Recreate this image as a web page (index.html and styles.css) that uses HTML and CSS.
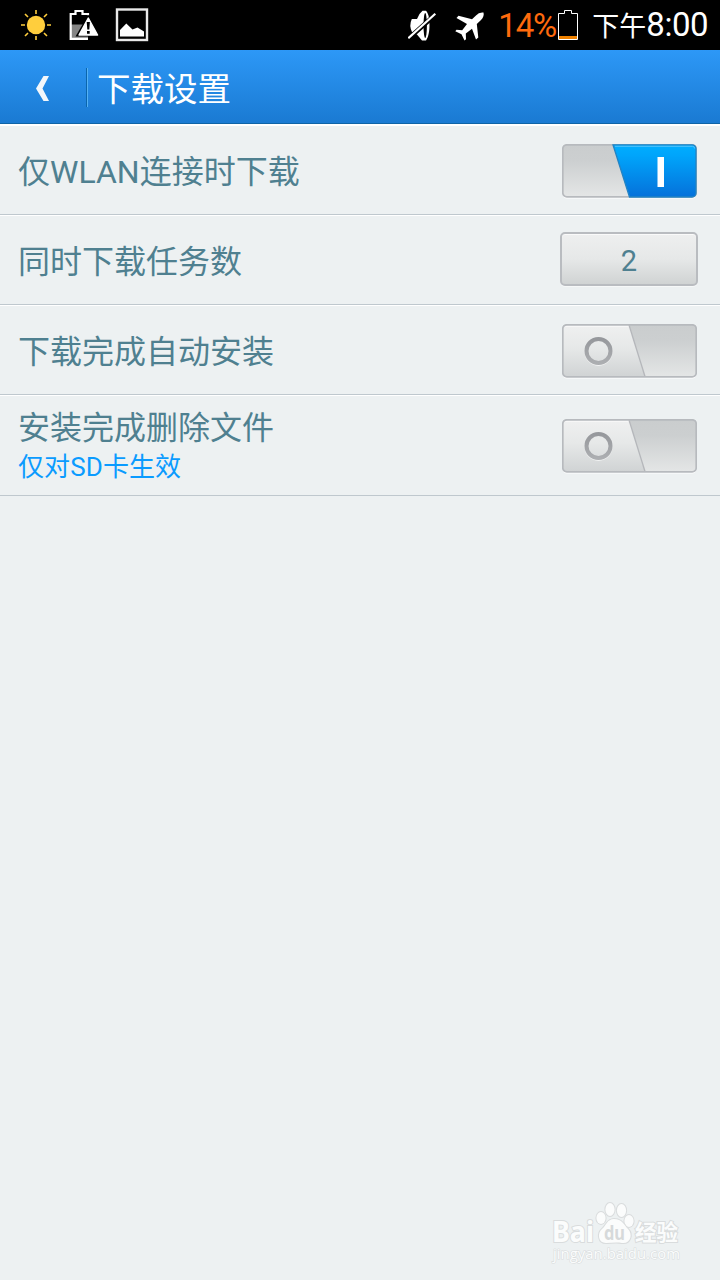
FILE: index.html
```html
<!DOCTYPE html>
<html lang="zh-CN">
<head>
    <meta charset="UTF-8">
    <meta name="viewport" content="width=device-width, initial-scale=1.0">
    <title>下载设置</title>
    <link rel="stylesheet" href="styles.css">
</head>
<body>

    <!-- Shared gradients and switch shapes -->
    <svg class="defs" width="0" height="0" aria-hidden="true">
        <defs>
            <linearGradient id="raised" x1="0" y1="0" x2="0" y2="1">
                <stop offset="0" stop-color="#eff0f0"/>
                <stop offset="0.45" stop-color="#e6e8e8"/>
                <stop offset="1" stop-color="#d0d3d4"/>
            </linearGradient>
            <linearGradient id="track" x1="0" y1="0" x2="0" y2="1">
                <stop offset="0" stop-color="#cacdce"/>
                <stop offset="0.3" stop-color="#cccfd0"/>
                <stop offset="1" stop-color="#e4e6e6"/>
            </linearGradient>
            <linearGradient id="blue" x1="0" y1="0" x2="0" y2="1">
                <stop offset="0" stop-color="#00aeff"/>
                <stop offset="0.2" stop-color="#00a5fb"/>
                <stop offset="1" stop-color="#0571da"/>
            </linearGradient>
            <linearGradient id="ring" x1="0" y1="0" x2="0" y2="1">
                <stop offset="0" stop-color="#96989c"/>
                <stop offset="1" stop-color="#acaeb1"/>
            </linearGradient>
            <symbol id="switchOff" viewBox="0 0 135 55">
                <rect x="1" y="2" width="133" height="52.5" rx="4" fill="#fff"/>
                <rect x="0.5" y="0.5" width="134" height="52.5" rx="4" fill="url(#track)"/>
                <path d="M4.5 1H67L83 52.5H4.5a4 4 0 0 1-4-4V5a4 4 0 0 1 4-4z" fill="url(#raised)"/>
                <path d="M3 2.2H67" stroke="#fafafa" stroke-width="1.2"/>
                <path d="M67 1L83 52.5" stroke="#b5b7bb" stroke-width="1.3"/>
                <rect x="0.8" y="0.8" width="133.4" height="52" rx="4" fill="none" stroke="#b7babe" stroke-width="1.7"/>
                <circle cx="36.5" cy="28" r="12.4" fill="none" stroke="#f2f3f3" stroke-width="3"/>
                <circle cx="36.5" cy="27" r="12" fill="none" stroke="url(#ring)" stroke-width="4"/>
            </symbol>
            <symbol id="switchOn" viewBox="0 0 135 55">
                <rect x="1" y="2" width="133" height="52.5" rx="4" fill="#fff"/>
                <rect x="0.8" y="0.8" width="133.4" height="52" rx="4" fill="url(#track)" stroke="#b7babe" stroke-width="1.7"/>
                <path d="M51 0.8H130a4 4 0 0 1 4 4V49a4 4 0 0 1-4 4H67.5z" fill="url(#blue)" stroke="#2384c4" stroke-width="1.3"/>
                <path d="M53 2.3H130.5q2 0 2.2 2.2" fill="none" stroke="#55c4fb" stroke-width="1"/>
                <rect x="95.5" y="13" width="6.5" height="30" fill="#fff"/>
            </symbol>
        </defs>
    </svg>

    <!-- Status bar -->
    <div class="status-bar">
        <div class="status-left">
            <svg class="sun" width="30" height="30" viewBox="0 0 30 30">
                <circle cx="15" cy="15" r="9.2" fill="#ffce3d"/>
                <path d="M15 0v4M15 26v4M0 15h4M26 15h4M4 4l3 3M23 23l3 3M4 26l3-3M23 7l3-3" stroke="#ffce3d" stroke-width="1.6"/>
            </svg>
            <svg class="battery-warn" width="30" height="31" viewBox="0 0 30 31">
                <path d="M2 14.5h17v14H2z" fill="#858585"/>
                <path d="M19 5.2V4h-5.5V1h-7v3H1.7v24.8H19" fill="none" stroke="#fff" stroke-width="2.2"/>
                <path d="M19 5L6.5 26.5h25z" fill="#000"/>
                <path d="M19.3 8L10 25h18.6z" fill="#fff" stroke="#fff" stroke-width="1.4" stroke-linejoin="round"/>
                <path d="M17.7 12h3.2l-.6 7.5h-2zM18 21h2.7v2.7H18z" fill="#000"/>
            </svg>
            <svg class="picture" width="34" height="34" viewBox="0 0 34 34">
                <rect x="2" y="1.5" width="30" height="30.5" fill="none" stroke="#e9e9e9" stroke-width="2.4"/>
                <path d="M5 28.5V22L11.3 15.5 17.5 21.5 22.5 19.5 29 23.5v5z" fill="#fff"/>
            </svg>
        </div>
        <div class="status-right">
            <svg class="muted" width="30" height="31" viewBox="0 0 30 31">
                <path d="M11.5 4L14.5.8H18C21 4 21.500 10 21.500 15.500S20.500 27 18 30.500H14L9 24.500 4 22Q.8 15.500 3.800 9H9z" fill="#fff"/>
                <ellipse cx="17.2" cy="15.5" rx="1.7" ry="12.5" fill="#000"/>
                <path d="M0 29L28 4" stroke="#000" stroke-width="4.6"/>
                <path d="M.3 28.3L27.300 3.800" stroke="#fff" stroke-width="2.2"/>
            </svg>
            <svg class="plane" width="30" height="29" viewBox="0 0 30 29">
                <path d="M28.500.6Q24 0 21 3.400L17 7.200 3.500 3.800 1.500 6 12 11.900 7.200 18.300 1.500 17.800.3 19.200 6.500 22.300 9.500 28.500 11 27.300 10.800 21.500 17 16.800 21 27.500 23.300 25.500 21.800 12 26 8Q29.500 4.500 28.500.6z" fill="#fff"/>
            </svg>
            <span class="percent">14%</span>
            <svg class="battery" width="20" height="30" viewBox="0 0 20 30">
                <path d="M.5 3.5H6.500V.5h7v3h6v26H.5z" fill="none" stroke="#fff"/>
                <rect x="1" y="26" width="18" height="3" fill="#f08200"/>
            </svg>
            <span class="clock"><span class="ampm">下午</span>8:00</span>
        </div>
    </div>

    <!-- Title bar -->
    <div class="header">
        <svg class="back" width="16" height="27" viewBox="0 0 16 27">
            <path d="M8.5 1H14L7.5 13.5 14 26H8.5L1 13.5z" fill="#f3f7fb"/>
        </svg>
        <div class="divider"></div>
        <h1>下载设置</h1>
    </div>

    <!-- Settings -->
    <ul class="settings">
        <li class="row">
            <span class="label">仅WLAN连接时下载</span>
            <svg class="switch" width="135" height="55"><use href="#switchOn"/></svg>
        </li>
        <li class="row">
            <span class="label">同时下载任务数</span>
            <button class="count">2</button>
        </li>
        <li class="row">
            <span class="label">下载完成自动安装</span>
            <svg class="switch" width="135" height="55"><use href="#switchOff"/></svg>
        </li>
        <li class="row tall">
            <div class="texts">
                <span class="label">安装完成删除文件</span>
                <span class="hint">仅对SD卡生效</span>
            </div>
            <svg class="switch" width="135" height="55"><use href="#switchOff"/></svg>
        </li>
    </ul>

    <!-- Watermark -->
    <div class="watermark">
        <svg width="136" height="66" viewBox="0 0 136 66">
            <g class="wm-shape">
                <ellipse cx="53" cy="17" rx="4.6" ry="6"/>
                <ellipse cx="62" cy="8.5" rx="4.6" ry="6.5"/>
                <ellipse cx="73.5" cy="9.5" rx="4.6" ry="6.5"/>
                <ellipse cx="81" cy="20" rx="4.6" ry="6"/>
                <path d="M66 18c-7 0-8 7-12 10-5 4-4 14 4 14 5 0 10-1 16 0 9 1 11-9 6-14-4-4-6-10-14-10z"/>
            </g>
            <text class="wm-logo" x="4" y="41" textLength="42" lengthAdjust="spacingAndGlyphs">Bai</text>
            <text class="wm-du" x="56" y="39" textLength="21" lengthAdjust="spacingAndGlyphs">du</text>
            <text class="wm-cn" x="87" y="39" textLength="43" lengthAdjust="spacingAndGlyphs">经验</text>
            <text class="wm-url" x="5" y="58" textLength="127" lengthAdjust="spacingAndGlyphs">jingyan.baidu.com</text>
        </svg>
    </div>

</body>
</html>
```
FILE: styles.css
```css
body {
    font-family: Roboto, "Noto Sans CJK SC", sans-serif;
    margin: 0;
    min-height: 100vh;
    background-color: #edf1f2;
}

svg {
    display: block;
    flex: none;
}

.defs {
    position: absolute;
}

/* Status bar */
.status-bar {
    display: flex;
    justify-content: space-between;
    align-items: center;
    height: 50px;
    padding: 0 12px 0 21px;
    background-color: #000;
    color: #fff;
}

.status-left,
.status-right {
    display: flex;
    align-items: center;
}

.battery-warn {
    margin-left: 18px;
}

.picture {
    margin-left: 16px;
}

.plane {
    margin: 2px 0 0 17px;
}

.percent {
    width: 58px;
    margin: 1px 2px 0 13px;
    font-size: 33px;
    line-height: 40px;
    letter-spacing: -1.2px;
    white-space: nowrap;
    color: #ff6a0d;
}

.clock {
    margin: 1px 0 0 14px;
    font-size: 33px;
    line-height: 40px;
    letter-spacing: -0.5px;
    white-space: nowrap;
}

.ampm {
    font-size: 27px;
    letter-spacing: 0;
}

/* Title bar */
.header {
    display: flex;
    align-items: center;
    box-sizing: border-box;
    height: 74px;
    padding-left: 35px;
    background: linear-gradient(#2d98f7, #1a7ad2);
    border-bottom: 1px solid #0f64a6;
}

.header .back {
    margin-top: 3px;
}

.divider {
    width: 1px;
    height: 39px;
    margin: 2px 0 0 35px;
    background-color: #0b65ac;
    border-right: 1px solid #55b2f5;
}

.header h1 {
    margin: 6px 0 0 9px;
    font-size: 33.5px;
    font-weight: 400;
    line-height: 44px;
    color: #fff;
}

/* Settings list */
.settings {
    margin: 0;
    padding: 0;
    list-style: none;
    border-top: 1px solid #fff;
}

.row {
    display: flex;
    justify-content: space-between;
    align-items: center;
    box-sizing: border-box;
    height: 90px;
    padding: 0 23px 0 18px;
    border-top: 1px solid #fff;
    border-bottom: 1px solid #bfc8ce;
}

.row.tall {
    height: 101px;
}

.label {
    margin-top: 3px;
    font-size: 32px;
    line-height: 40px;
    color: #4f8090;
}

.switch {
    margin-top: 2px;
}

.texts {
    display: flex;
    flex-direction: column;
}

.hint {
    font-size: 26px;
    line-height: 38px;
    letter-spacing: 0.1px;
    color: #0a9bff;
}

.count {
    width: 138px;
    height: 54px;
    margin: 0 -1px 2px 0;
    padding: 3px 0 0;
    border: 2px solid #b9bcc0;
    border-radius: 5px;
    background: linear-gradient(#eeefef, #e6e8e8 50%, #d0d3d3);
    box-shadow: inset 0 1px 0 #fafafa, 0 1px 0 #f6f8f8;
    font-family: inherit;
    font-size: 29px;
    color: #4f8090;
}

/* Watermark */
.watermark {
    position: absolute;
    right: 36px;
    bottom: 13px;
}

.watermark text,
.wm-shape {
    fill: #fbfcfc;
    stroke: #d9dcdd;
    stroke-width: 2px;
    paint-order: stroke;
}

.wm-logo {
    font: bold 29px "Noto Sans", sans-serif;
}

.watermark .wm-du {
    font: bold 20px "Noto Sans", sans-serif;
    fill: #d6d9da;
    stroke: none;
}

.wm-cn {
    font: bold 22px "Noto Sans CJK SC", sans-serif;
}

.watermark .wm-url {
    font: 15px "Open Sans", sans-serif;
    stroke-width: 1.2px;
}
```
